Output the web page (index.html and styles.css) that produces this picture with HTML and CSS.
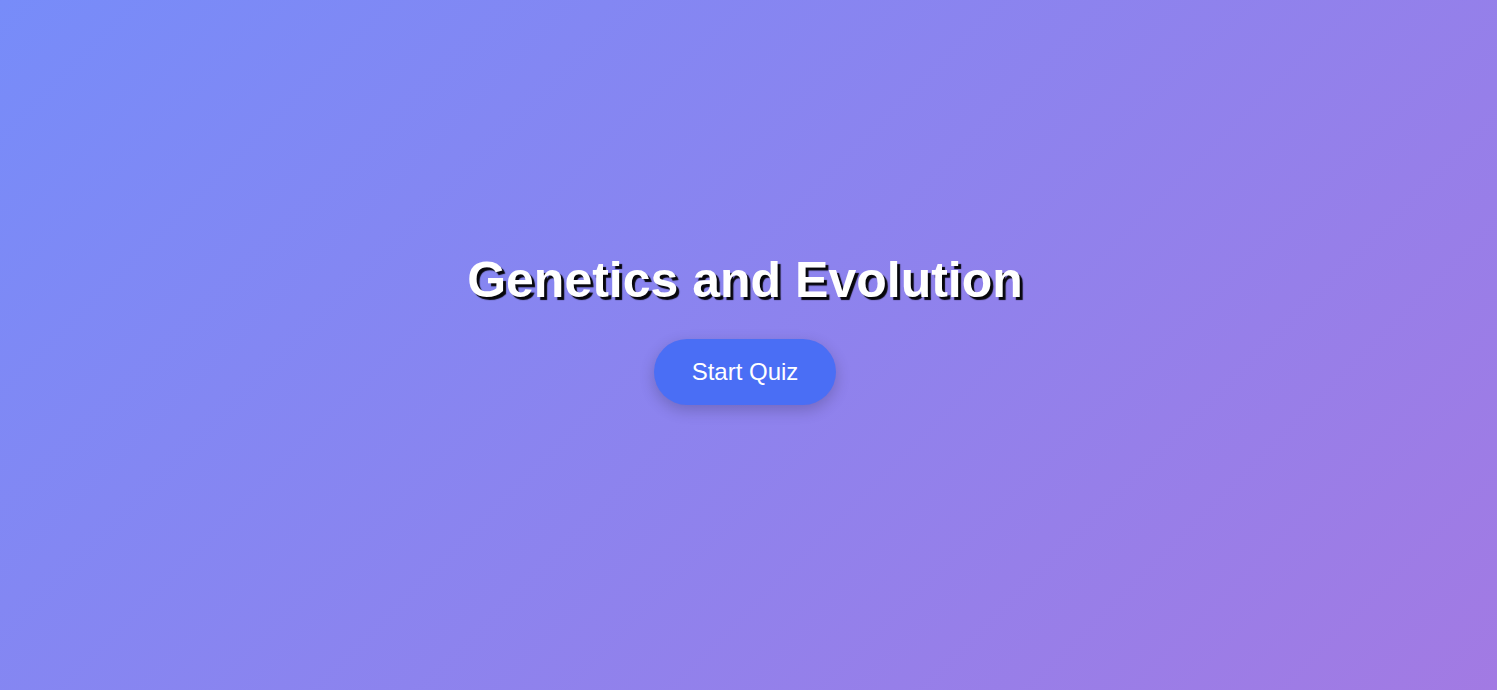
FILE: index.html
```html
<!DOCTYPE html>
<html lang="en">
<head>
<meta charset="utf-8">
<title>Genetics and Evolution</title>
<link rel="stylesheet" href="styles.css">
</head>
<body>
<main class="intro">
  <h1 class="title">Genetics and Evolution</h1>
  <button class="start-btn" type="button">Start Quiz</button>
</main>
</body>
</html>
```
FILE: styles.css
```css
html, body {
  margin: 0;
  padding: 0;
  height: 100%;
}
body {
  font-family: "Liberation Sans", Arial, sans-serif;
  background: linear-gradient(135deg, #778cf9 0%, #a27ae3 100%);
  color: #fff;
}
.intro {
  height: 100%;
  box-sizing: border-box;
  padding: 0 7px 33px 0;
  display: flex;
  flex-direction: column;
  align-items: center;
  justify-content: center;
}
.title {
  margin: 0 0 30px;
  font-size: 50px;
  font-weight: 700;
  line-height: 1.15;
  text-shadow: 3px 3px 1px rgba(0, 0, 0, 0.95);
}
.start-btn {
  font-family: inherit;
  font-size: 24px;
  color: #fff;
  background: #4a6ef5;
  border: none;
  border-radius: 50px;
  padding: 19px 38px;
  line-height: 28px;
  box-shadow: 0 5px 15px rgba(0, 0, 0, 0.2);
  cursor: pointer;
}
```
